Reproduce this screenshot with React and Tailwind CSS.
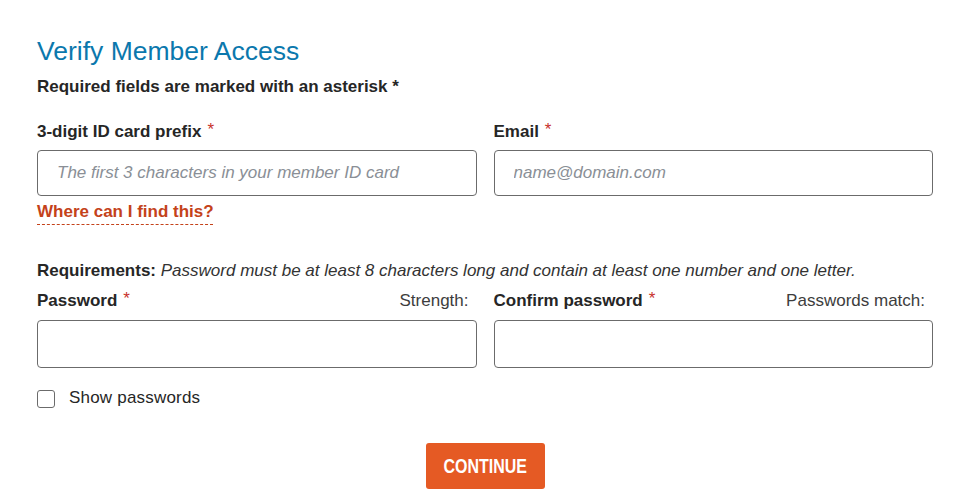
import React, { useState } from "react";

// red asterisk next to required labels
function Req() {
  return <span className="ml-[6px] relative -top-[2px] font-normal text-[#c8322c]">*</span>;
}

function Field({ label, right, placeholder, type = "text", h = "h-[46px]", gap = "mt-[9px]" }) {
  return (
    <div className="flex flex-col">
      <div className="flex items-center justify-between leading-[20px]">
        <label className="font-bold text-[#262626]">
          {label}
          <Req />
        </label>
        {right && <span className="pr-[8px] text-[#3d3d3d]">{right}</span>}
      </div>
      <input
        type={type}
        placeholder={placeholder}
        className={`${gap} ${h} w-full rounded-[4px] border border-[#6b6b6b] px-[19px] text-[17px] text-[#262626] outline-none placeholder:italic placeholder:text-[#8a8f96]`}
      />
    </div>
  );
}

export default function App() {
  const [show, setShow] = useState(false);

  return (
    <div className="min-h-screen bg-white" style={{ fontFamily: '"Liberation Sans", Arial, sans-serif' }}>
      <div className="ml-[37px] w-[896px] pt-[35px] text-[17px] text-[#262626]">
        <h1 className="text-[26.5px] font-normal leading-[32px] text-[#0b78ad]">Verify Member Access</h1>
        <p className="mt-[10px] font-bold leading-[20px]">Required fields are marked with an asterisk *</p>

        <div className="mt-[25px] grid grid-cols-2 gap-x-[17px]">
          <div className="flex flex-col">
            <Field label="3-digit ID card prefix" placeholder="The first 3 characters in your member ID card" gap="mt-[8px]" />
            <div className="mt-[6px] leading-[20px]">
              <a
                href="#"
                className="font-bold text-[#c4421a] underline decoration-dashed decoration-[#c4421a] decoration-[1px] underline-offset-[7px]"
              >
                Where can I find this?
              </a>
            </div>
          </div>
          <Field label="Email" placeholder="name@domain.com" type="email" gap="mt-[8px]" />
        </div>

        <p className="mt-[39px] leading-[20px]">
          <span className="font-bold">Requirements:</span>{" "}
          <span className="italic text-[#333]">Password must be at least 8 characters long and contain at least one number and one letter.</span>
        </p>

        <div className="mt-[10px] grid grid-cols-2 gap-x-[17px]">
          <Field label="Password" right="Strength:" type={show ? "text" : "password"} h="h-[48px]" />
          <Field label="Confirm password" right="Passwords match:" type={show ? "text" : "password"} h="h-[48px]" />
        </div>

        <label className="mt-[21px] flex items-center gap-[14px] leading-[20px] cursor-pointer">
          <input
            type="checkbox"
            checked={show}
            onChange={(e) => setShow(e.target.checked)}
            className="h-[18px] w-[18px] appearance-none rounded-[3px] border-[1.5px] border-[#6b6b6b] bg-white checked:bg-[#0b78ad]"
          />
          <span className="relative -top-[1px] text-[#262626] tracking-[0.2px]">Show passwords</span>
        </label>

        <div className="mt-[34px] flex justify-center">
          <button className="h-[46px] w-[119px] rounded-[3px] bg-[#e55a24] text-[20px] font-bold uppercase text-white">
            <span className="inline-block scale-x-[0.8]">Continue</span>
          </button>
        </div>
      </div>
    </div>
  );
}
